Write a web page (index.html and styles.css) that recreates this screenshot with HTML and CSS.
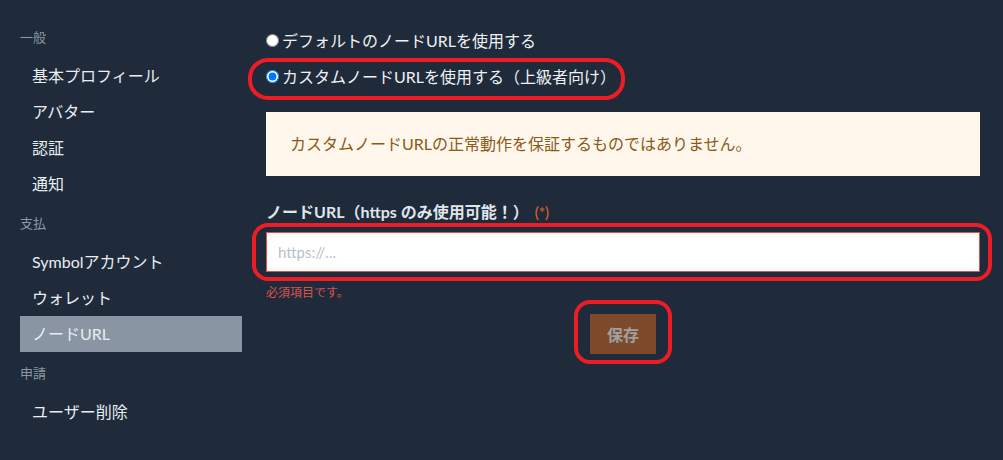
FILE: index.html
```html
<!DOCTYPE html>
<html lang="ja">
<head>
<meta charset="utf-8">
<title>ノードURL</title>
<link rel="stylesheet" href="styles.css">
</head>
<body>
<div class="page">
  <nav class="sidebar">
    <div class="group-label">一般</div>
    <div class="nav-item">基本プロフィール</div>
    <div class="nav-item">アバター</div>
    <div class="nav-item">認証</div>
    <div class="nav-item">通知</div>
    <div class="group-label">支払</div>
    <div class="nav-item">Symbolアカウント</div>
    <div class="nav-item">ウォレット</div>
    <div class="nav-item active">ノードURL</div>
    <div class="group-label">申請</div>
    <div class="nav-item">ユーザー削除</div>
  </nav>
  <main class="main">
    <label class="radio-row"><input type="radio" name="node">デフォルトのノードURLを使用する</label>
    <label class="radio-row"><input type="radio" name="node" checked>カスタムノードURLを使用する（上級者向け）</label>
    <div class="warning">カスタムノードURLの正常動作を保証するものではありません。</div>
    <div class="field-label">ノードURL（https のみ使用可能！）<span class="req">(*)</span></div>
    <input class="url-input" type="text" placeholder="https://...">
    <div class="error">必須項目です。</div>
    <div class="actions"><button class="save">保存</button></div>
  </main>
</div>
<svg class="marks" width="1003" height="460" viewBox="0 0 1003 460">
  <rect x="250" y="60" width="373" height="38" rx="18" />
  <rect x="254" y="225" width="736" height="54" rx="14" />
  <rect x="576" y="302" width="94" height="60" rx="14" />
</svg>
</body>
</html>
```
FILE: styles.css
```css
html, body {
  margin: 0;
  padding: 0;
  background: #1f2b3a;
  font-family: Lato, "Noto Sans CJK JP", sans-serif;
  color: #e8edf2;
}
body {
  width: 1003px;
  height: 460px;
  overflow: hidden;
  position: relative;
}
.page {
  display: flex;
  gap: 24px;
}
.sidebar {
  margin-left: 20px;
  width: 222px;
  padding-top: 16px;
  display: flex;
  flex-direction: column;
}
.group-label {
  height: 42px;
  line-height: 42px;
  font-size: 13px;
  color: #8d98a5;
}
.nav-item {
  height: 36px;
  line-height: 36px;
  padding-left: 12px;
  font-size: 16px;
  color: #e8edf2;
}
.nav-item.active {
  background: #8995a2;
}
.main {
  width: 714px;
  padding-top: 22px;
  display: flex;
  flex-direction: column;
}
.radio-row {
  height: 36px;
  display: flex;
  align-items: center;
  font-size: 16px;
  color: #eef1f4;
}
.radio-row input {
  margin: 0 3px 0 0;
  width: 13px;
  height: 13px;
}
.warning {
  margin-top: 18px;
  height: 64px;
  line-height: 64px;
  padding: 0 24px;
  background: #fff6ec;
  color: #8a5a16;
  font-size: 16px;
}
.field-label {
  margin-top: 24px;
  height: 24px;
  line-height: 24px;
  font-size: 16px;
  font-weight: bold;
  color: #dfe5eb;
}
.req {
  margin-left: 6px;
  color: #e0632c;
  font-weight: normal;
  font-size: 15px;
}
.url-input {
  margin-top: 8px;
  box-sizing: border-box;
  width: 714px;
  height: 40px;
  border: 1px solid #d9534f;
  background: #fff;
  padding: 0 11px;
  font-family: Lato, "Noto Sans CJK JP", sans-serif;
  font-size: 15px;
  outline: none;
}
.url-input::placeholder {
  color: #b9c1c9;
}
.error {
  margin-top: 12px;
  height: 18px;
  line-height: 18px;
  font-size: 12px;
  color: #d9534f;
}
.actions {
  margin-top: 12px;
  display: flex;
  justify-content: center;
}
.save {
  width: 66px;
  height: 40px;
  border: none;
  background: #7d4a2c;
  color: #a0a0a0;
  font-family: Lato, "Noto Sans CJK JP", sans-serif;
  font-size: 16px;
  font-weight: bold;
  padding: 0;
}
.marks {
  position: absolute;
  top: 0;
  left: 0;
  pointer-events: none;
}
.marks rect {
  fill: none;
  stroke: #ee1c25;
  stroke-width: 4;
}
```
